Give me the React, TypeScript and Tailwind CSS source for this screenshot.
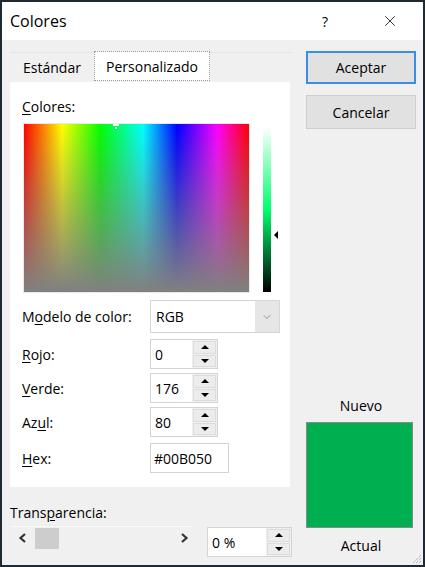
import { ChevronDown, X } from "lucide-react";

const font = { fontFamily: '"Open Sans", "Noto Sans", "Liberation Sans", sans-serif' };

function SpinButtons() {
  return (
    <div className="flex w-[25px] flex-col gap-[1px] bg-[#f0f0f0] p-[1px]">
      <div className="flex flex-1 items-center justify-center border border-[#dcdcdc] bg-[#ececec]">
        <div className="h-0 w-0 border-x-[4px] border-b-[4px] border-x-transparent border-b-black" />
      </div>
      <div className="flex flex-1 items-center justify-center border border-[#dcdcdc] bg-[#ececec]">
        <div className="h-0 w-0 border-x-[4px] border-t-[4px] border-x-transparent border-t-black" />
      </div>
    </div>
  );
}

function Spinner({ value, width }: { value: string; width: string }) {
  return (
    <div className={`flex h-[30px] ${width} border border-[#d4d4d4] bg-white`}>
      <div className="flex flex-1 items-center pl-[4px] text-[14px] text-black">{value}</div>
      <SpinButtons />
    </div>
  );
}

function FieldRow({ label, under, rest, value }: { label: string; under: string; rest: string; value: string }) {
  return (
    <div className="flex h-[30px] items-center">
      <div className="w-[128px] text-[14px] text-black">
        {label}
        <span className="underline underline-offset-2">{under}</span>
        {rest}
      </div>
      <Spinner value={value} width="w-[68px]" />
    </div>
  );
}

export default function App() {
  return (
    <div className="relative h-[567px] w-[425px] overflow-hidden border-2 border-[#1e2a33] bg-[#f0f0f0] select-none" style={font}>
      {/* barra de título */}
      <div className="flex h-[38px] items-center bg-white pl-[8px]">
        <span className="text-[16px] text-black">Colores</span>
        <span className="ml-auto mr-[53px] text-[14px] text-black">?</span>
        <X className="mr-[24px] h-[18px] w-[18px] text-[#222]" strokeWidth={1.2} />
      </div>

      <div className="flex">
        {/* columna izquierda */}
        <div className="ml-[8px] w-[282px]">
          <div className="mt-[12px] flex h-[30px] items-end border-t border-[#e4e4e4]">
            <div className="flex h-[29px] w-[84px] items-center justify-center text-[14px] text-black">Estándar</div>
            <div className="flex h-[30px] w-[116px] -translate-y-[1px] items-center justify-center border border-dotted border-[#9a9a9a] bg-white text-[14px] text-black">
              Personalizado
            </div>
          </div>

          <div className="h-[405px] w-[280px] bg-white pl-[12px] pt-[16px]">
            <div className="text-[14px] leading-[18px] text-black">
              <span className="underline underline-offset-2">C</span>olores:
            </div>
            <div className="mt-[7px] flex">
              <div className="relative ml-[1px] h-[170px] w-[227px] border border-[#e8e8e8]">
                <div
                  className="absolute inset-0"
                  style={{
                    background:
                      "linear-gradient(to right, #ff0000 0%, #ffff00 17%, #00ff00 34%, #00ffff 53%, #0000ff 68%, #ff00ff 86%, #ff0000 100%)",
                  }}
                />
                <div className="absolute inset-0 bg-gradient-to-b from-[#80808000] to-[#808080]" />
                <div className="absolute left-[89px] top-[0px] h-[2px] w-[6px] bg-white" />
                <div className="absolute left-[91px] top-[3px] h-[2px] w-[2px] bg-white" />
              </div>
              <div className="relative ml-[13px] mt-[4px] h-[165px] w-[8px]">
                <div
                  className="h-full w-full"
                  style={{ background: "linear-gradient(to bottom, #ffffff 0%, #00ff6d 50%, #000000 100%)" }}
                />
                <div className="absolute left-[11px] top-[104px] h-0 w-0 border-y-[4px] border-r-[4px] border-y-transparent border-r-black" />
              </div>
            </div>

            <div className="mt-[7px] flex h-[33px] items-center">
              <div className="w-[128px] text-[14px] text-black">
                M<span className="underline underline-offset-2">o</span>delo de color:
              </div>
              <div className="flex h-[33px] w-[130px] border border-[#d6d6d6] bg-white">
                <div className="flex flex-1 items-center pl-[5px] text-[14px] text-black">RGB</div>
                <div className="flex w-[24px] items-center justify-center bg-[#e6e6e6]">
                  <ChevronDown className="h-[12px] w-[12px] text-[#777]" strokeWidth={1.5} />
                </div>
              </div>
            </div>

            <div className="mt-[6px] flex flex-col gap-[4px]">
              <FieldRow label="" under="R" rest="ojo:" value="0" />
              <FieldRow label="" under="V" rest="erde:" value="176" />
              <FieldRow label="Az" under="u" rest="l:" value="80" />
            </div>

            <div className="mt-[6px] flex h-[30px] items-center">
              <div className="w-[128px] text-[14px] text-black">
                <span className="underline underline-offset-2">H</span>ex:
              </div>
              <div className="flex h-[30px] w-[79px] items-center border border-[#d4d4d4] bg-white pl-[3px] text-[14px] text-black">
                #00B050
              </div>
            </div>
          </div>

          <div className="mt-[17px] text-[14px] leading-[18px] text-black">
            Trans<span className="underline underline-offset-2">p</span>arencia:
          </div>
          <div className="mt-[4px] flex items-start">
            <div className="flex h-[23px] w-[183px] items-center border-t border-[#fafafa]">
              <svg width="12" height="12" viewBox="0 0 12 12" className="ml-[7px]">
                <path d="M8 2 L3.5 6 L8 10" fill="none" stroke="#333" strokeWidth="2.2" />
              </svg>
              <div className="ml-[6px] h-[21px] w-[24px] bg-[#cdcdcd]" />
              <svg width="12" height="12" viewBox="0 0 12 12" className="ml-auto mr-[3px]">
                <path d="M4 2 L8.5 6 L4 10" fill="none" stroke="#333" strokeWidth="2.2" />
              </svg>
            </div>
            <div className="ml-[14px] mt-[1px]">
              <Spinner value="0 %" width="w-[85px]" />
            </div>
          </div>
        </div>

        {/* columna derecha */}
        <div className="ml-[14px] flex w-[110px] flex-col">
          <div className="mt-[11px] flex h-[33px] items-center justify-center border-2 border-[#3a8ee6] bg-[#e1e1e1] text-[14px] text-black">
            Aceptar
          </div>
          <div className="mt-[11px] flex h-[34px] items-center justify-center border border-[#cfcfcf] bg-[#e1e1e1] text-[14px] text-black">
            Cancelar
          </div>
          <div className="mt-[268px] text-center text-[14px] leading-[18px] text-black">Nuevo</div>
          <div className="mt-[7px] h-[106px] w-[107px] border border-[#8a8a8a] bg-[#00b050]" />
          <div className="mt-[9px] text-center text-[14px] leading-[18px] text-black">Actual</div>
        </div>
      </div>

      {/* asa de redimensionar */}
      <svg width="12" height="12" viewBox="0 0 12 12" className="absolute bottom-[1px] right-[1px]">
        <path d="M11 3 L3 11 M11 6 L6 11 M11 9 L9 11" stroke="#a0a0a0" strokeWidth="1" strokeDasharray="1 1" />
      </svg>
    </div>
  );
}
